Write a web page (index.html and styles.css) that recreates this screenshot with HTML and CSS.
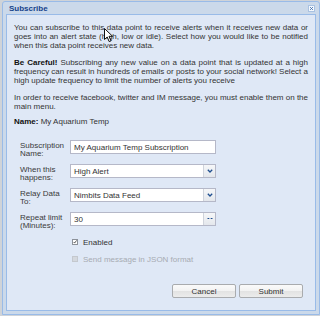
FILE: index.html
```
<!DOCTYPE html>
<html lang="en">
<head>
    <meta charset="UTF-8">
    <title>Subscribe</title>
    <link rel="stylesheet" href="styles.css">
</head>
<body>
    <!-- subscribe window -->
    <div class="window">
        <div class="window-header">
            <span class="window-title">Subscribe</span>
            <span class="window-close">
                <svg width="7" height="7" viewBox="0 0 7 7"><path d="M1.5 1.5 L5.5 5.5 M5.5 1.5 L1.5 5.5" stroke="#3d6aa8" stroke-width="1.2"/></svg>
            </span>
        </div>

        <div class="window-body">
            <p class="text">You can subscribe to this data point to receive alerts when it receives new data or goes into an alert state (high, low or idle). Select how you would like to be notified when this data point receives new data.</p>
            <p class="text"><b>Be Careful!</b> Subscribing any new value on a data point that is updated at a high frequency can result in hundreds of emails or posts to your social network! Select a high update frequency to limit the number of alerts you receive</p>
            <p class="text">In order to receive facebook, twitter and IM message, you must enable them on the main menu.</p>
            <p class="text name"><b>Name:</b> My Aquarium Temp</p>

            <form class="sub-form">
                <div class="form-row">
                    <label class="form-label">Subscription Name:</label>
                    <input class="text-field" type="text" value="My Aquarium Temp Subscription">
                </div>
                <div class="form-row">
                    <label class="form-label">When this happens:</label>
                    <div class="combo">
                        <span class="combo-value">High Alert</span>
                        <span class="combo-trigger">
                            <svg width="6" height="4" viewBox="0 0 6 4"><path d="M0.8 0.8 L3 3 L5.2 0.8" fill="none" stroke="#1f4f8f" stroke-width="1.3"/></svg>
                        </span>
                    </div>
                </div>
                <div class="form-row">
                    <label class="form-label">Relay Data To:</label>
                    <div class="combo">
                        <span class="combo-value">Nimbits Data Feed</span>
                        <span class="combo-trigger">
                            <svg width="6" height="4" viewBox="0 0 6 4"><path d="M0.8 0.8 L3 3 L5.2 0.8" fill="none" stroke="#1f4f8f" stroke-width="1.3"/></svg>
                        </span>
                    </div>
                </div>
                <div class="form-row">
                    <label class="form-label">Repeat limit (Minutes):</label>
                    <div class="combo">
                        <span class="combo-value">30</span>
                        <span class="combo-trigger">
                            <svg width="6" height="4" viewBox="0 0 6 4"><path d="M0.5 1.5 H2.3 M3.7 1.5 H5.5" stroke="#1f4f8f" stroke-width="1"/></svg>
                        </span>
                    </div>
                </div>

                <div class="check-row">
                    <span class="check">
                        <svg width="6" height="6" viewBox="0 0 6 6"><path d="M1 3 L2.4 4.6 L5.4 0.6" fill="none" stroke="#222" stroke-width="1.1"/></svg>
                    </span>
                    <span>Enabled</span>
                </div>
                <div class="check-row disabled">
                    <span class="check"></span>
                    <span>Send message in JSON format</span>
                </div>

                <div class="buttons">
                    <button type="button" class="btn">Cancel</button>
                    <button type="button" class="btn">Submit</button>
                </div>
            </form>
        </div>
    </div>

    <!-- mouse pointer -->
    <svg class="cursor" width="10" height="15" viewBox="0 0 10 15">
        <path d="M0.5 0.5 L0.5 11.5 L3.2 9 L5.2 13.6 L7 12.8 L5 8.3 L8.6 8.3 Z" fill="#fff" stroke="#111" stroke-width="1"/>
    </svg>
</body>
</html>
```

FILE: styles.css
```
* {
    margin: 0;
    padding: 0;
    box-sizing: border-box;
}

body {
    font-family: 'Liberation Sans', Arial, sans-serif;
    font-size: 8px;
    color: #333;
    background: #cfd3d8;
    width: 320px;
    height: 316px;
    overflow: hidden;
    position: relative;
}

/* window frame */
.window {
    margin: 1px 0 0 2px;
    width: 318px;
    height: 314px;
    background: #cbd9ea;
    border: 1px solid #99bbe8;
    border-radius: 3px 3px 0 0;
    padding: 0 3px 3px 3px;
    display: flex;
    flex-direction: column;
}

.window-header {
    height: 12px;
    display: flex;
    align-items: center;
    justify-content: space-between;
    padding: 0 1px 0 3px;
}

.window-title {
    color: #15428b;
    font-weight: bold;
    font-size: 8px;
}

.window-close {
    width: 7px;
    height: 7px;
    background: #f4f8fd;
    border: 1px solid #a9c2e2;
    display: flex;
    align-items: center;
    justify-content: center;
}

.window-close svg {
    display: block;
}

/* body panel */
.window-body {
    flex: 1;
    background: #dfe8f6;
    border: 1px solid #99bbe8;
    padding: 8px 7px 0 7px;
}

.text {
    line-height: 9px;
    text-align: justify;
    margin-bottom: 8px;
}

.text b {
    color: #111;
}

.name {
    margin-top: -2px;
    margin-bottom: 14px;
}

/* form */
.sub-form {
    display: flex;
    flex-direction: column;
    gap: 10px;
    padding-left: 6px;
}

.form-row {
    display: flex;
    align-items: flex-start;
    height: 14px;
}

.form-label {
    width: 50px;
    line-height: 8px;
    padding-top: 2px;
    color: #3a3a3a;
}

.text-field,
.combo {
    width: 146px;
    height: 14px;
    background: #fff;
    border: 1px solid #b5b8c8;
    font-family: 'Liberation Sans', Arial, sans-serif;
    font-size: 8px;
    color: #333;
    padding: 0 3px;
}

.combo {
    display: flex;
    align-items: center;
    padding: 0 0 0 3px;
}

.combo-value {
    flex: 1;
}

.combo-trigger {
    width: 12px;
    height: 100%;
    background: linear-gradient(#f6f7f9, #e4e7ec);
    border-left: 1px solid #d0d4dc;
    display: flex;
    align-items: center;
    justify-content: center;
}

.check-row {
    display: flex;
    align-items: center;
    gap: 5px;
    padding-left: 52px;
    height: 10px;
    margin-top: 1px;
}

.check-row + .check-row {
    margin-top: -3px;
}

.check {
    width: 6px;
    height: 6px;
    background: #fff;
    border: 1px solid #8c9199;
    display: flex;
    align-items: center;
    justify-content: center;
}

.check svg {
    display: block;
}

.disabled {
    color: #a7abb2;
}

.disabled .check {
    background: #d4d8de;
    border-color: #c4c8ce;
}

.buttons {
    display: flex;
    justify-content: flex-end;
    gap: 3px;
    margin-top: 10px;
    padding-right: 5px;
}

.btn {
    width: 64px;
    height: 14px;
    font-family: 'Liberation Sans', Arial, sans-serif;
    font-size: 8px;
    color: #333;
    background: linear-gradient(#fafafa 0%, #f2f2f2 50%, #e2e2e2 51%, #ececec 100%);
    border: 1px solid #a9abae;
    border-radius: 2px;
}

/* mouse pointer over the text */
.cursor {
    position: absolute;
    left: 104px;
    top: 28px;
}
```
